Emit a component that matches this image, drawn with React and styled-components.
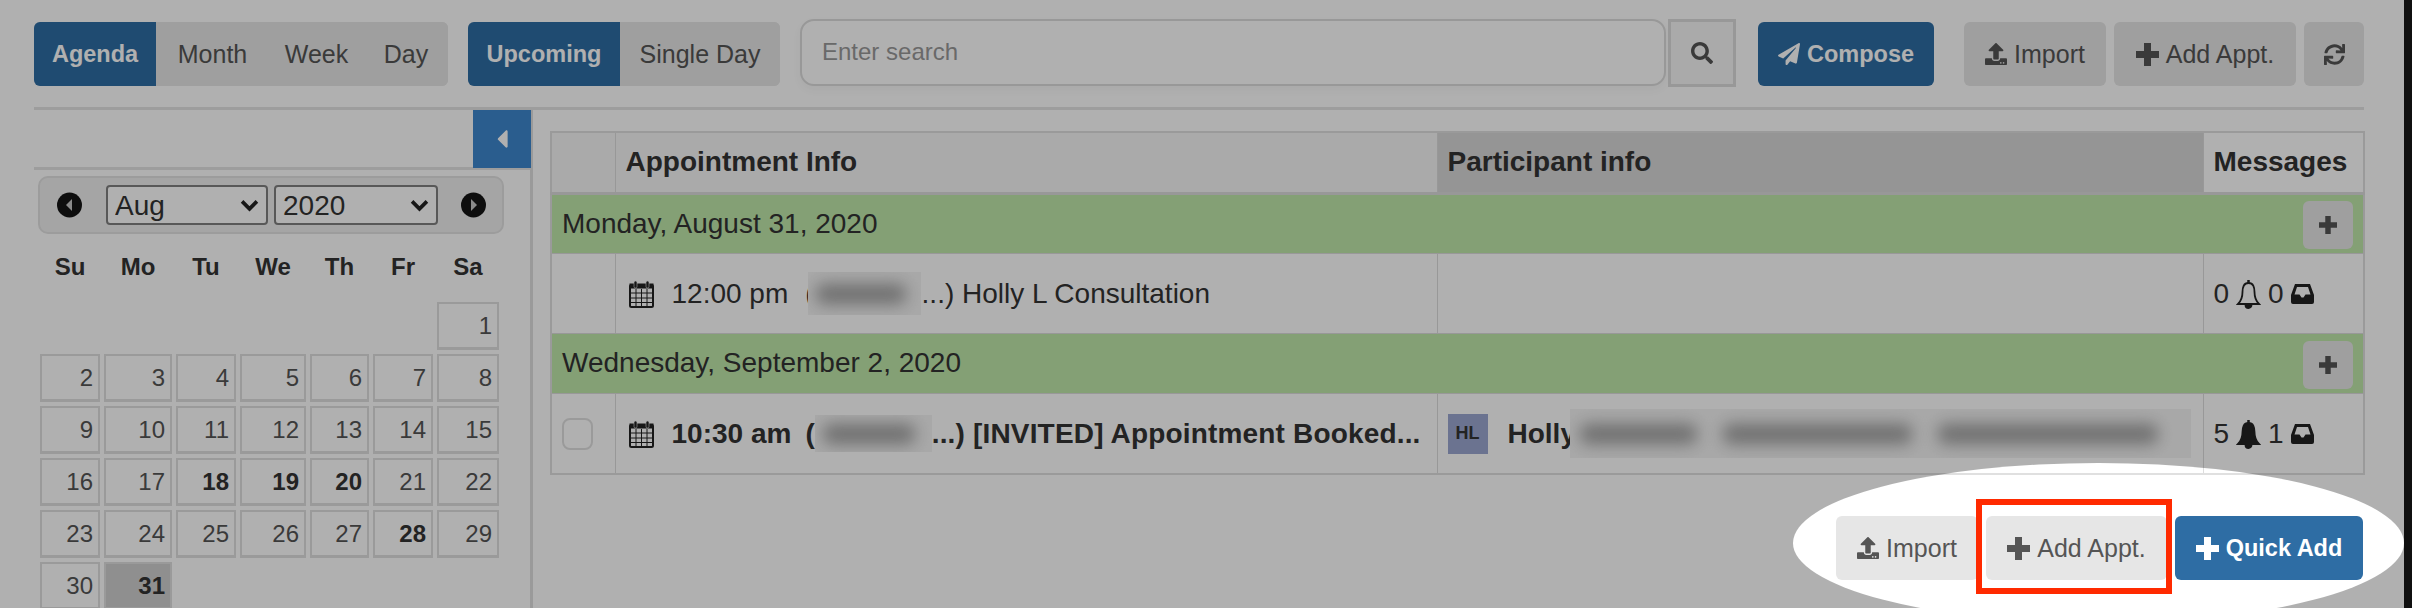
import React from 'react'
import styled, { createGlobalStyle } from 'styled-components'
import { FaSearch, FaPaperPlane, FaUpload, FaSync, FaCaretLeft } from 'react-icons/fa'

const GlobalStyle = createGlobalStyle`
  html, body { margin: 0; padding: 0; background: #000; }
  body { font-family: "Liberation Sans", Arial, sans-serif; color: #333; }
  * { box-sizing: border-box; }
`

const Page = styled.div`
  display: flex;
  width: 2412px;
  height: 608px;
  overflow: hidden;
`

const Main = styled.div`
  position: relative;
  width: 2404px;
  height: 608px;
  overflow: hidden;
  background: #fff;
  padding: 22px 40px 0 34px;
`

const Toolbar = styled.div`
  display: flex;
  align-items: center;
  height: 64px;
`

const Group = styled.div`
  display: flex;
  height: 64px;
  margin-right: ${p => p.$mr || 0}px;
  border-radius: 6px;
  overflow: hidden;
  background: #e6e6e6;
`

const Btn = styled.div`
  display: flex;
  align-items: center;
  justify-content: center;
  gap: 7px;
  height: 64px;
  width: ${p => p.$w}px;
  margin-right: ${p => p.$mr || 0}px;
  flex: none;
  font-size: ${p => (p.$primary ? 23.5 : 25)}px;
  font-weight: ${p => (p.$primary ? 700 : 400)};
  color: ${p => (p.$primary ? '#fff' : '#555')};
  background: ${p => (p.$primary ? '#2e6da4' : '#e6e6e6')};
  border-radius: ${p => (p.$flat ? 0 : 6)}px;
`

const HighlightBtn = styled(Btn)`
  position: relative;
  z-index: 2;
  &::after {
    content: '';
    position: absolute;
    left: -10px;
    right: -5px;
    top: -17px;
    bottom: -14px;
    border: 6px solid #ff2a00;
  }
`

const SearchInput = styled.div`
  width: 866px;
  height: 67px;
  margin-top: -3px;
  padding: 0 20px 2px;
  display: flex;
  align-items: center;
  font-size: 24px;
  color: #999;
  background: #fff;
  border: 2px solid #ddd;
  border-radius: 14px;
  box-shadow: 0 4px 10px rgba(0, 0, 0, 0.04);
`

const SearchBtn = styled.div`
  width: 68px;
  height: 68px;
  margin: -3px 22px 0 2px;
  display: flex;
  align-items: center;
  justify-content: center;
  color: #555;
  font-size: 22px;
  background: #f7f7f7;
  border: 3px solid #dcdcdc;
`

const Rule = styled.div`
  height: 3px;
  margin-top: 21px;
  background: #e4e4e4;
`

const Body = styled.div`
  display: grid;
  grid-template-columns: 499px 1831px;
`

const Sidebar = styled.div`
  height: 500px;
  border-right: 3px solid #e0e0e0;
`

const SideTop = styled.div`
  display: flex;
  justify-content: flex-end;
  height: 60px;
  margin-right: -1px;
  border-bottom: 3px solid #e4e4e4;
`

const Toggle = styled.div`
  width: 58px;
  height: 58px;
  display: flex;
  align-items: center;
  justify-content: center;
  color: #fff;
  font-size: 30px;
  background: #3e87ce;
`

const CalNav = styled.div`
  display: flex;
  align-items: center;
  width: 466px;
  height: 58px;
  margin: 6px 0 0 4px;
  padding-left: 17px;
  background: #f0f0f0;
  border: 2px solid #e2e2e2;
  border-radius: 10px;
`

const CalSelect = styled.select`
  appearance: none;
  width: ${p => p.$w}px;
  height: 40px;
  margin: ${p => p.$m};
  padding: 0 0 0 7px;
  font-family: "Liberation Sans", Arial, sans-serif;
  font-size: 28px;
  color: #333;
  border: 2px solid #808080;
  border-radius: 4px;
  background: #fff url("data:image/svg+xml,%3Csvg xmlns='http://www.w3.org/2000/svg' viewBox='0 0 20 14'%3E%3Cpath d='M2 2.500l8 8 8-8' fill='none' stroke='%23222' stroke-width='4'/%3E%3C/svg%3E") no-repeat right 7px center / 19px 13px;
`

const NavIcon = styled.svg`
  width: 25px;
  height: 26px;
  flex: none;
`

const Weekdays = styled.div`
  display: grid;
  grid-template-columns: 60px 68px 60px 66px 59px 60px 62px;
  column-gap: 4px;
  margin: 8px 0 10px 6px;
  height: 50px;
  align-items: center;
  text-align: center;
  font-size: 24px;
  font-weight: 700;
  color: #333;
`

const Days = styled.div`
  display: grid;
  grid-template-columns: 60px 68px 60px 66px 59px 60px 62px;
  grid-auto-rows: 48px;
  gap: 4px;
  margin: 0 0 0 6px;
`

const Day = styled.div`
  grid-column: ${p => p.$col || 'auto'};
  display: flex;
  align-items: center;
  justify-content: flex-end;
  padding: 0 5px 0 0;
  font-size: 24px;
  font-weight: ${p => (p.$bold ? 700 : 400)};
  color: ${p => (p.$bold ? '#333' : '#555')};
  background: ${p => (p.$selected ? '#cfcfcf' : 'transparent')};
  border: 2px solid #e0e0e0;
  border-bottom-width: 3px;
`

const Content = styled.div`
  padding: 21px 0 0 17px;
`

const Table = styled.table`
  width: 1813px;
  table-layout: fixed;
  border-collapse: collapse;
  border: 2px solid #e0e0e0;
`

const Th = styled.th`
  height: 61px;
  width: ${p => p.$w}px;
  padding: 0 10px;
  text-align: left;
  font-size: 28px;
  font-weight: 700;
  color: #333;
  background: ${p => p.$bg || '#f7f7f7'};
  border: 1px solid #ddd;
  border-bottom-width: 3px;
  white-space: nowrap;
`

const GroupCell = styled.td`
  height: 60px;
  padding: 0 10px 0 10px;
  background: #bfe8aa;
`

const GroupRow = styled.div`
  display: flex;
  align-items: center;
  justify-content: space-between;
  font-size: 28px;
  color: #333;
`

const SmallPlus = styled.div`
  display: flex;
  align-items: center;
  justify-content: center;
  width: 50px;
  height: 48px;
  margin-top: 3px;
  color: #555;
  background: #e6e6e6;
  border-radius: 6px;
`

const Td = styled.td`
  height: ${p => p.$h}px;
  padding: 1px 10px 0 ${p => p.$pl || 10}px;
  border: 1px solid #ddd;
  vertical-align: middle;
  overflow: hidden;
  white-space: nowrap;
`

const Line = styled.div`
  display: flex;
  align-items: center;
  gap: ${p => p.$gap || 0}px;
  font-size: 28px;
  font-weight: ${p => (p.$bold ? 700 : 400)};
  color: #333;
`

const Wide = styled.span`
  letter-spacing: 0.17px;
`

const Paren = styled.span`
  margin-left: ${p => p.$ml}px;
`

const Check = styled.div`
  width: 31px;
  height: 32px;
  border: 2px solid #e0e0e0;
  border-radius: 8px;
`

const CalIcon = styled.svg`
  width: 25px;
  height: 28px;
  margin-right: 18px;
  flex: none;
`

const BlurBox = styled.span`
  display: flex;
  align-items: center;
  gap: ${p => p.$gap || 0}px;
  flex: none;
  width: ${p => p.$w}px;
  height: ${p => p.$h}px;
  margin: ${p => p.$m || 0};
  padding: 0 ${p => p.$pad || 8}px;
  overflow: hidden;
  background: #f4f4f4;
`

const Smudge = styled.span`
  display: block;
  flex: none;
  width: ${p => p.$w}px;
  height: 20px;
  background: #a0a0a0;
  border-radius: 8px;
  filter: blur(8px);
`

const Avatar = styled.div`
  width: 40px;
  height: 40px;
  display: flex;
  align-items: center;
  justify-content: center;
  flex: none;
  font-size: 18px;
  font-weight: 700;
  color: #333;
  background: #9ba7d1;
`

const Msg = styled.div`
  display: flex;
  align-items: center;
  gap: 7px;
  font-size: 28px;
  color: #333;
`

const BottomBar = styled.div`
  display: flex;
  justify-content: flex-end;
  gap: 8px;
  width: 1813px;
  margin-top: 41px;
`

const Spotlight = styled.div`
  position: absolute;
  left: 1793px;
  top: 463px;
  width: 611px;
  height: 160px;
  border-radius: 50%;
  box-shadow: 0 0 0 3000px rgba(0, 0, 0, 0.31);
  z-index: 1;
`

const Strip = styled.div`
  width: 8px;
  height: 608px;
  flex: none;
  background: #101010;
`

const weekdays = ['Su', 'Mo', 'Tu', 'We', 'Th', 'Fr', 'Sa']
const boldDays = [18, 19, 20, 28, 31]
const bellPath = 'M12.500 4C7.500 4 6.500 8.500 6.500 13C6.500 19.500 4.500 22.500 2 25H23C20.500 22.500 18.500 19.500 18.500 13C18.500 8.500 17.500 4 12.500 4Z'

function CalendarGlyph() {
  return (
    <CalIcon viewBox="0 0 25 28" fill="none" stroke="#222">
      <rect x="1" y="5" width="23" height="22" rx="1.5" strokeWidth="2" />
      <rect x="1" y="4" width="23" height="4" fill="#222" strokeWidth="1" />
      <rect x="5" y="1" width="3" height="7" rx="1.5" fill="#222" stroke="#f4f4f4" strokeWidth="0.6" />
      <rect x="17" y="1" width="3" height="7" rx="1.5" fill="#222" stroke="#f4f4f4" strokeWidth="0.6" />
      <path d="M7 9v17M12.500 9v17M18 9v17M2 13h21M2 18h21M2 22.500h21" strokeWidth="1" />
    </CalIcon>
  )
}

function NavArrow({ dir }) {
  return (
    <NavIcon viewBox="0 0 25 26">
      <circle cx="12.500" cy="13" r="12.500" fill="#151515" />
      <path d={dir === 'left' ? 'M15 7v12l-6-6z' : 'M10 7v12l6-6z'} fill="#c8c8c8" />
    </NavIcon>
  )
}

// thick square plus, the package ones are too thin and rounded
function Plus({ size = 23 }) {
  return (
    <svg width={size} height={size} viewBox="0 0 23 23" fill="currentColor">
      <path d="M8 0h7v8h8v7h-8v8H8v-8H0V8h8z" />
    </svg>
  )
}

function Bell({ solid }) {
  return (
    <svg width="25" height="30" viewBox="0 0 25 30" fill={solid ? '#222' : 'none'} stroke="#222" strokeWidth="1.8">
      <path d={bellPath} />
      <path d="M12.500 1v3" strokeWidth="2.500" />
      <path d="M9.500 26a3 3 0 0 0 6 0" fill="#222" />
    </svg>
  )
}

function Inbox() {
  return (
    <svg width="23" height="20" viewBox="0 0 23 20" fill="#222" fillRule="evenodd">
      <path d="M4 0h15l4 11v7a2 2 0 0 1-2 2H2a2 2 0 0 1-2-2v-7zM6 3L3.500 10.500h5l2 3h2l2-3h5L17 3z" />
    </svg>
  )
}

export default function App() {
  const days = []
  for (let d = 1; d <= 31; d++) {
    days.push(
      <Day key={d} $col={d === 1 ? 7 : null} $bold={boldDays.includes(d)} $selected={d === 31}>
        {d}
      </Day>
    )
  }

  return (
    <Page>
      <GlobalStyle />
      <Main>
        <Toolbar>
          <Group $mr={20}>
            <Btn $w={122} $primary $flat>Agenda</Btn>
            <Btn $w={113} $flat>Month</Btn>
            <Btn $w={95} $flat>Week</Btn>
            <Btn $w={84} $flat>Day</Btn>
          </Group>
          <Group $mr={20}>
            <Btn $w={152} $primary $flat>Upcoming</Btn>
            <Btn $w={160} $flat>Single Day</Btn>
          </Group>
          <SearchInput>Enter search</SearchInput>
          <SearchBtn><FaSearch /></SearchBtn>
          <Btn $w={176} $mr={30} $primary><FaPaperPlane size={22} />Compose</Btn>
          <Btn $w={142} $mr={8}><FaUpload size={22} />Import</Btn>
          <Btn $w={182} $mr={8}><Plus />Add Appt.</Btn>
          <Btn $w={60}><FaSync size={21} /></Btn>
        </Toolbar>
        <Rule />

        <Body>
          <Sidebar>
            <SideTop>
              <Toggle><FaCaretLeft /></Toggle>
            </SideTop>
            <CalNav>
              <NavArrow dir="left" />
              <CalSelect $w={162} $m="0 0 0 24px" defaultValue="Aug">
                <option>Aug</option>
              </CalSelect>
              <CalSelect $w={164} $m="0 23px 0 6px" defaultValue="2020">
                <option>2020</option>
              </CalSelect>
              <NavArrow dir="right" />
            </CalNav>
            <Weekdays>
              {weekdays.map(w => <div key={w}>{w}</div>)}
            </Weekdays>
            <Days>{days}</Days>
          </Sidebar>

          <Content>
            <Table>
              <thead>
                <tr>
                  <Th $w={64} $bg="#f7f7f7" />
                  <Th $w={822}>Appointment Info</Th>
                  <Th $w={766} $bg="#d8d8d8">Participant info</Th>
                  <Th $w={161} $bg="#ffffff">Messages</Th>
                </tr>
              </thead>
              <tbody>
                <tr>
                  <GroupCell colSpan={4}>
                    <GroupRow>
                      Monday, August 31, 2020
                      <SmallPlus><Plus size={18} /></SmallPlus>
                    </GroupRow>
                  </GroupCell>
                </tr>
                <tr>
                  <Td $h={80} />
                  <Td $h={80} $pl={13}>
                    <Line>
                      <CalendarGlyph />
                      12:00 pm
                      <Paren $ml={17}>(</Paren>
                      <BlurBox $w={113} $h={43} $m="0 1px 0 -7px">
                        <Smudge $w={90} />
                      </BlurBox>
                      ...) Holly L Consultation
                    </Line>
                  </Td>
                  <Td $h={80} />
                  <Td $h={80}>
                    <Msg>0 <Bell /> 0 <Inbox /></Msg>
                  </Td>
                </tr>
                <tr>
                  <GroupCell colSpan={4}>
                    <GroupRow>
                      Wednesday, September 2, 2020
                      <SmallPlus><Plus size={18} /></SmallPlus>
                    </GroupRow>
                  </GroupCell>
                </tr>
                <tr>
                  <Td $h={81}><Check /></Td>
                  <Td $h={81} $pl={13}>
                    <Line $bold>
                      <CalendarGlyph />
                      10:30 am
                      <Paren $ml={14}>(</Paren>
                      <BlurBox $w={117} $h={37}>
                        <Smudge $w={92} />
                      </BlurBox>
                      <Wide>...) [INVITED] Appointment Booked...</Wide>
                    </Line>
                  </Td>
                  <Td $h={81}>
                    <Line $bold $gap={20}>
                      <Avatar>HL</Avatar>
                      Holly
                      <BlurBox $w={621} $h={49} $m="0 0 0 -26px" $pad={10} $gap={26}>
                        <Smudge $w={117} />
                        <Smudge $w={189} />
                        <Smudge $w={220} />
                      </BlurBox>
                    </Line>
                  </Td>
                  <Td $h={81}>
                    <Msg>5 <Bell solid /> 1 <Inbox /></Msg>
                  </Td>
                </tr>
              </tbody>
            </Table>
            <BottomBar>
              <Btn $w={142}><FaUpload size={22} />Import</Btn>
              <HighlightBtn $w={181}><Plus />Add Appt.</HighlightBtn>
              <Btn $w={188} $primary><Plus />Quick Add</Btn>
            </BottomBar>
          </Content>
        </Body>
        <Spotlight />
      </Main>
      <Strip />
    </Page>
  )
}
